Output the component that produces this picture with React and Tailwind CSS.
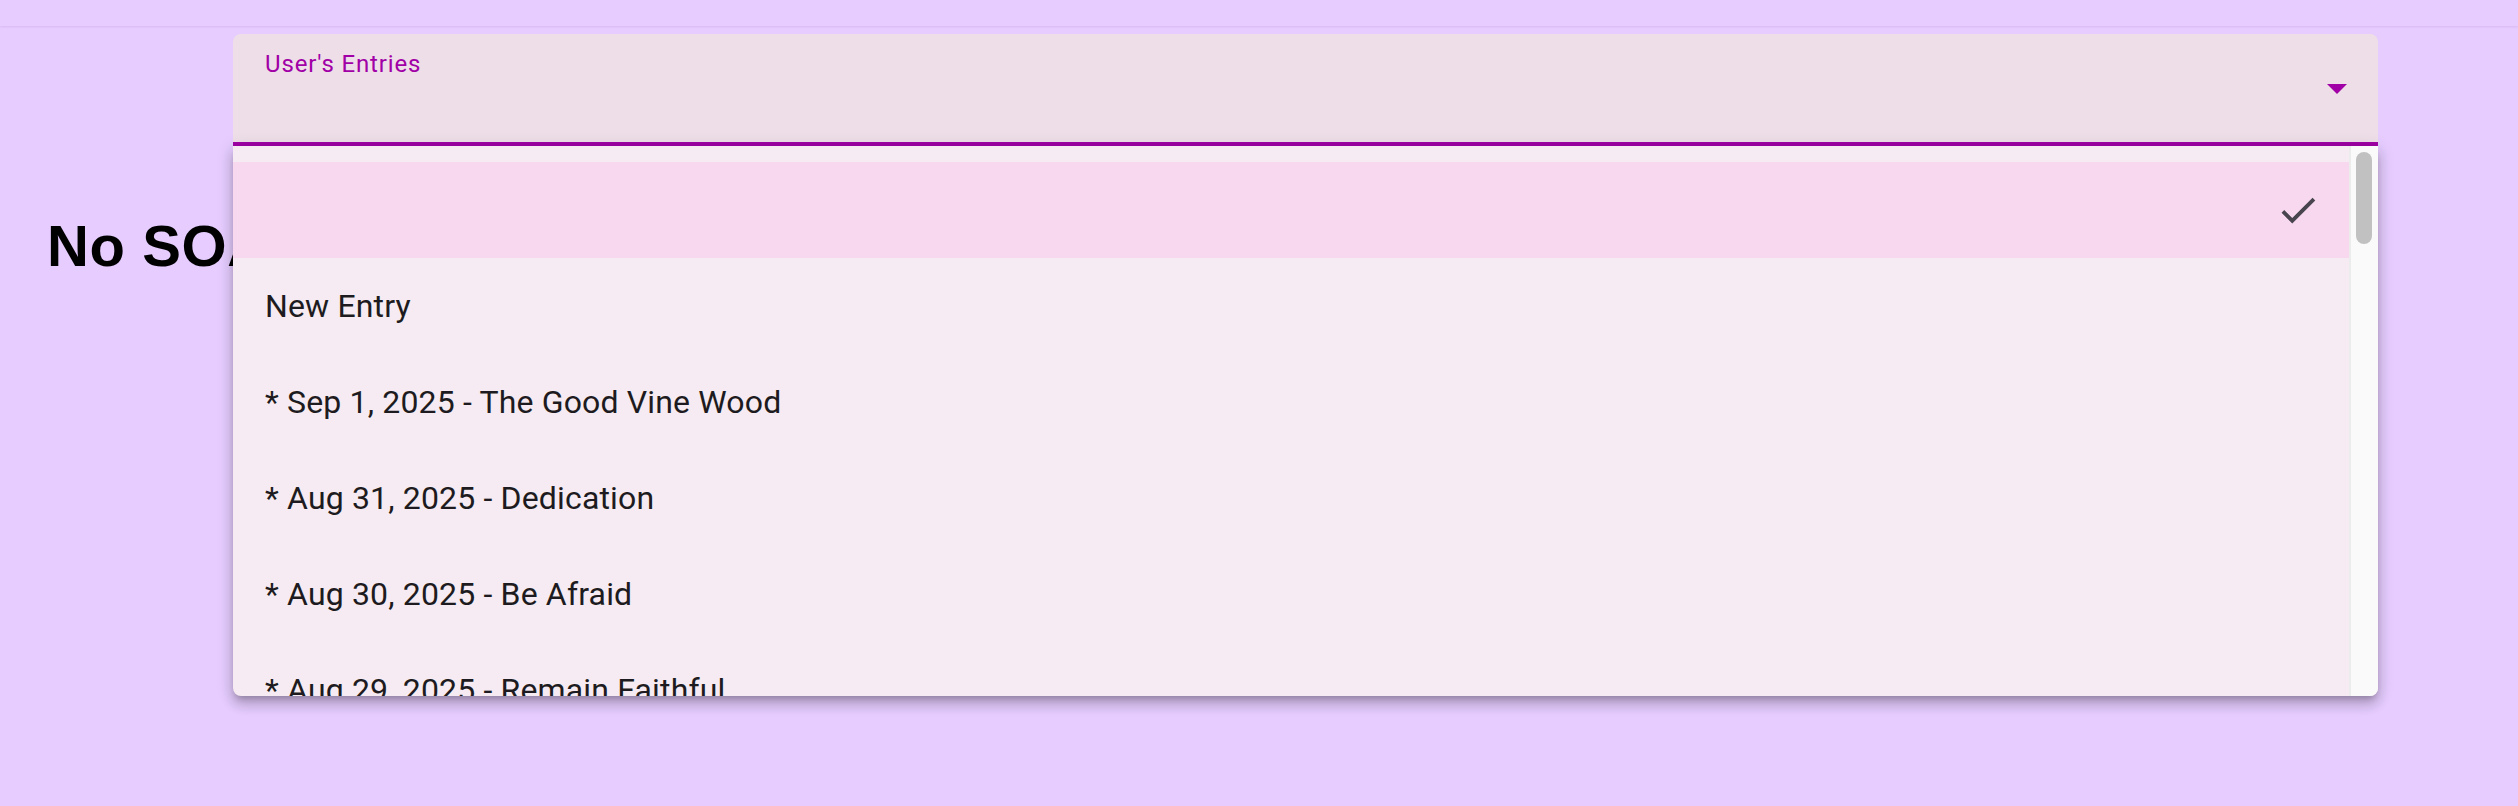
import React from "react";

const entries = [
	"New Entry",
	"* Sep 1, 2025 - The Good Vine Wood",
	"* Aug 31, 2025 - Dedication",
	"* Aug 30, 2025 - Be Afraid",
	"* Aug 29, 2025 - Remain Faithful",
];

const CheckIcon = () => (
	<svg viewBox="0 0 24 24" className="w-[46px] h-[46px]" fill="#49454f">
		<path d="M9 16.17 4.83 12l-1.42 1.41L9 19 21 7l-1.41-1.41z" />
	</svg>
);

const ArrowDropDown = () => (
	<svg viewBox="0 0 24 24" className="w-[48px] h-[48px]" fill="#a000a6">
		<path d="M7 10l5 5 5-5z" />
	</svg>
);

const EntryMenu = () => (
	<div className="absolute left-[233px] top-[146px] w-[2145px] h-[550px] flex bg-[#f6ebf2] rounded-b-[8px] overflow-hidden shadow-[0_5px_6px_-3px_rgba(0,0,0,0.2),0_9px_12px_1px_rgba(0,0,0,0.14),0_3px_16px_2px_rgba(0,0,0,0.12)]">
		<ul className="flex-1 pt-[16px] overflow-hidden">
			{/* selected empty option */}
			<li className="h-[96px] flex items-center justify-end pr-[28px] bg-[#f8d8ef]">
				<CheckIcon />
			</li>
			{entries.map((label, i) => (
				<li key={i} className="h-[96px] flex items-center pl-[32px] text-[32px] tracking-[0.005em] text-[#1d1b20] whitespace-nowrap">
					{label}
				</li>
			))}
		</ul>
		{/* scrollbar */}
		<div className="w-[29px] bg-[#fafafa] border-l-2 border-[#ececec] pt-[6px] pl-[5px]">
			<div className="w-[16px] h-[92px] rounded-full bg-[#c1c1c1]" />
		</div>
	</div>
);

export default function App() {
	return (
		<div className="relative min-h-screen bg-[#e6ccff] font-['Roboto',sans-serif]">
			<div className="h-[26px] shadow-[0_1px_2px_rgba(120,60,160,0.12)]" />

			<div className="ml-[233px] mr-[140px] mt-[8px]">
				<div className="relative h-[112px] rounded-t-[8px] bg-[#eedee8] border-b-4 border-[#a000a6] flex items-center justify-end pr-[17px]">
					<span className="absolute left-[32px] top-[14px] text-[24px] leading-[32px] tracking-[0.035em] text-[#a000a6]">
						User's Entries
					</span>
					<ArrowDropDown />
				</div>
			</div>

			<h1 className="mt-[68px] ml-[47px] text-[58px] leading-[64px] tracking-[0.01em] font-bold text-black font-['Liberation_Sans',Arial,sans-serif]">
				No SOAP Journal Entry Selected
			</h1>

			<EntryMenu />
		</div>
	);
}
